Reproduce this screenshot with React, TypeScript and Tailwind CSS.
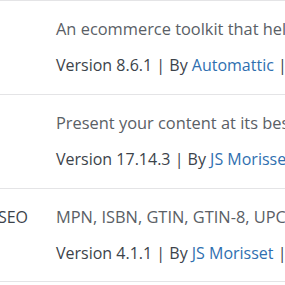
const rows = [
  {
    name: 'WooCommerce',
    description: 'An ecommerce toolkit that helps you sell anything. Beautifully.',
    version: '8.6.1',
    author: 'Automattic',
  },
  {
    name: 'WPSSO Core',
    description: 'Present your content at its best in search results and on social sites.',
    version: '17.14.3',
    author: 'JS Morisset',
  },
  {
    name: 'WPSSO Product Metadata for WooCommerce SEO',
    description: 'MPN, ISBN, GTIN, GTIN-8, UPC, EAN, GTIN-14, net dimensions, and more.',
    version: '4.1.1',
    author: 'JS Morisset',
  },
];

export default function App() {
  return (
    <div
      className="w-[285px] h-[285px] overflow-hidden bg-white text-[16px] leading-[22px]"
      style={{fontFamily: '"Open Sans", "Noto Sans", sans-serif'}}
    >
      {rows.map((row, i) => (
        <div key={row.name} className="flex h-[94px] border-t border-[#e4e4e6] last:border-b">
          <div className="w-[56px] shrink-0 flex justify-end overflow-hidden pr-[28px] pt-[17px]">
            <span className="whitespace-nowrap text-[#3c434a]">{i === 2 ? row.name : ''}</span>
          </div>
          <div className="flex-1 min-w-0 pt-[17px] whitespace-nowrap">
            <p className="text-[16.4px] text-[#5a6066]">{row.description}</p>
            <p className="mt-[14px] text-[#3c434a]">
              Version {row.version} | By{' '}
              <a href="#" className="text-[#2f6fb0]">{row.author}</a> | View details
            </p>
          </div>
        </div>
      ))}
    </div>
  );
}
